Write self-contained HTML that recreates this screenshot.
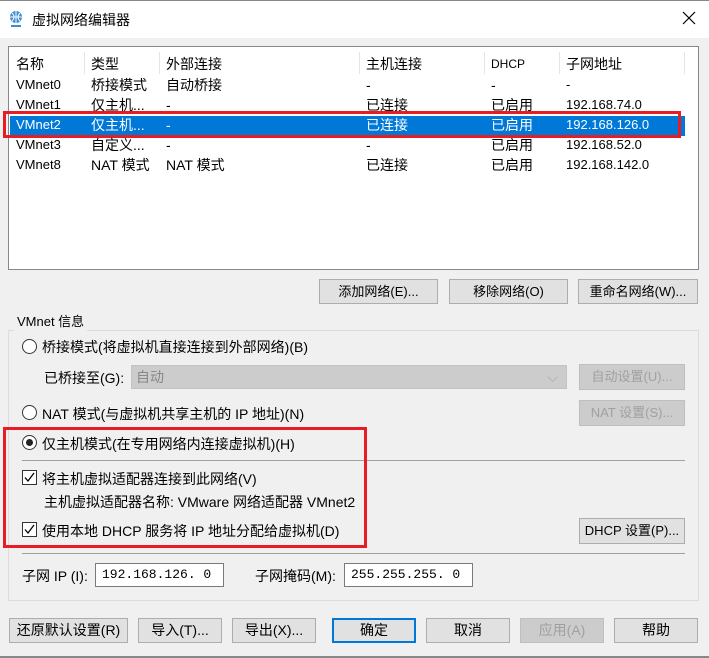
<!DOCTYPE html>
<html><head><meta charset="utf-8"><style>
*{margin:0;padding:0;box-sizing:border-box}
body{width:709px;height:658px;background:#f0f0f0;font-family:"Liberation Sans","Noto Sans CJK SC",sans-serif;font-size:13px;color:#000;position:relative;overflow:hidden}
.a{position:absolute;white-space:nowrap}
.btn{position:absolute;background:#e1e1e1;border:1px solid #adadad;text-align:center;line-height:23px;font-size:13px}
.dis{color:#a0a0a0;background:#ccc;border-color:#bfbfbf}
.radio{position:absolute;width:15px;height:15px;border:1px solid #333;border-radius:50%;background:#fff}
.chk{position:absolute;width:15px;height:15px;border:1px solid #333;background:#fff}
.inp{position:absolute;background:#fff;border:1px solid #7a7a7a;line-height:22px;padding-left:6px;font-family:"Liberation Mono",monospace;font-size:13px}
.col{position:absolute;top:75px;line-height:20px;font-size:14px;white-space:nowrap}
.col.s{font-size:13px}
</style></head><body>
<div class="a" style="left:0;top:0;width:709px;height:38px;background:#fff;border-top:1px solid #888"></div>
<svg class="a" style="left:8px;top:10px" width="16" height="18" viewBox="0 0 16 18"><circle cx="8" cy="7" r="6" fill="#3c8dd0"/><path d="M2 7h12M8 1v12M4 3q4 4 0 8M12 3q-4 4 0 8" stroke="#fff" stroke-width="1" fill="none"/><rect x="3" y="15" width="10" height="2" fill="#3c8dd0"/></svg>
<div class="a" style="left:32px;top:10px;font-size:14px">虚拟网络编辑器</div>
<svg class="a" style="left:682px;top:11px" width="14" height="14" viewBox="0 0 14 14"><path d="M1 1L13 13M13 1L1 13" stroke="#000" stroke-width="1.2"/></svg>

<div class="a" style="left:8px;top:46px;width:691px;height:224px;background:#fff;border:1px solid #828790"></div>
<div class="a" style="left:84px;top:52px;width:1px;height:22px;background:#e5e5e5"></div>
<div class="a" style="left:159px;top:52px;width:1px;height:22px;background:#e5e5e5"></div>
<div class="a" style="left:359px;top:52px;width:1px;height:22px;background:#e5e5e5"></div>
<div class="a" style="left:484px;top:52px;width:1px;height:22px;background:#e5e5e5"></div>
<div class="a" style="left:559px;top:52px;width:1px;height:22px;background:#e5e5e5"></div>
<div class="a" style="left:684px;top:52px;width:1px;height:22px;background:#e5e5e5"></div>
<div class="a" style="left:16px;top:54px;font-size:14px">名称</div>
<div class="a" style="left:91px;top:54px;font-size:14px">类型</div>
<div class="a" style="left:166px;top:54px;font-size:14px">外部连接</div>
<div class="a" style="left:366px;top:54px;font-size:14px">主机连接</div>
<div class="a" style="left:491px;top:57px;font-size:12px">DHCP</div>
<div class="a" style="left:566px;top:54px;font-size:14px">子网地址</div>

<div class="a" style="left:10px;top:116px;width:675px;height:20px;background:#0078d7"></div>
<div class="a" style="left:3px;top:111px;width:678px;height:27px;border:3px solid #e81c24"></div>

<div class="col s" style="left:16px">VMnet0<br>VMnet1<br><span style="color:#fff">VMnet2</span><br>VMnet3<br>VMnet8</div>
<div class="col" style="left:91px">桥接模式<br>仅主机...<br><span style="color:#fff">仅主机...</span><br>自定义...<br>NAT 模式</div>
<div class="col" style="left:166px">自动桥接<br>-<br><span style="color:#fff">-</span><br>-<br>NAT 模式</div>
<div class="col" style="left:366px">-<br>已连接<br><span style="color:#fff">已连接</span><br>-<br>已连接</div>
<div class="col" style="left:491px">-<br>已启用<br><span style="color:#fff">已启用</span><br>已启用<br>已启用</div>
<div class="col s" style="left:566px">-<br>192.168.74.0<br><span style="color:#fff">192.168.126.0</span><br>192.168.52.0<br>192.168.142.0</div>

<div class="btn" style="left:319px;top:279px;width:119px;height:25px">添加网络(E)...</div>
<div class="btn" style="left:449px;top:279px;width:119px;height:25px">移除网络(O)</div>
<div class="btn" style="left:578px;top:279px;width:120px;height:25px">重命名网络(W)...</div>

<div class="a" style="left:8px;top:330px;width:691px;height:271px;border:1px solid #dcdcdc"></div>
<div class="a" style="left:14px;top:313px;background:#f0f0f0;padding:0 3px;line-height:18px">VMnet 信息</div>

<div class="radio" style="left:22px;top:339px"></div>
<div class="a" style="left:42px;top:337px;font-size:14px">桥接模式(将虚拟机直接连接到外部网络)(B)</div>
<div class="a" style="left:44px;top:368px;font-size:14px">已桥接至(G):</div>
<div class="a" style="left:131px;top:365px;width:436px;height:24px;background:#ccc;border:1px solid #c3c3c3;color:#888;padding-left:4px;line-height:22px;font-size:14px">自动<span style="position:absolute;right:8px;color:#aaa">⌵</span></div>
<div class="btn dis" style="left:579px;top:364px;width:106px;height:26px">自动设置(U)...</div>
<div class="radio" style="left:22px;top:405px"></div>
<div class="a" style="left:42px;top:404px;font-size:14px">NAT 模式(与虚拟机共享主机的 IP 地址)(N)</div>
<div class="btn dis" style="left:579px;top:400px;width:106px;height:26px">NAT 设置(S)...</div>

<div class="radio" style="left:22px;top:435px"><div style="position:absolute;left:3px;top:3px;width:7px;height:7px;border-radius:50%;background:#222"></div></div>
<div class="a" style="left:42px;top:434px;font-size:14px">仅主机模式(在专用网络内连接虚拟机)(H)</div>
<div class="a" style="left:22px;top:460px;width:663px;height:1px;background:#a0a0a0"></div>
<div class="chk" style="left:22px;top:470px"><svg width="13" height="13" viewBox="0 0 13 13" style="position:absolute;left:0;top:0"><path d="M2 6.5L5 10L11 2" stroke="#000" stroke-width="1.3" fill="none"/></svg></div>
<div class="a" style="left:42px;top:469px;font-size:14px">将主机虚拟适配器连接到此网络(V)</div>
<div class="a" style="left:44px;top:492px;font-size:14px">主机虚拟适配器名称: VMware 网络适配器 VMnet2</div>
<div class="chk" style="left:22px;top:522px"><svg width="13" height="13" viewBox="0 0 13 13" style="position:absolute;left:0;top:0"><path d="M2 6.5L5 10L11 2" stroke="#000" stroke-width="1.3" fill="none"/></svg></div>
<div class="a" style="left:42px;top:521px;font-size:14px">使用本地 DHCP 服务将 IP 地址分配给虚拟机(D)</div>
<div class="btn" style="left:579px;top:518px;width:106px;height:26px">DHCP 设置(P)...</div>
<div class="a" style="left:3px;top:427px;width:364px;height:121px;border:3px solid #e81c24"></div>
<div class="a" style="left:22px;top:553px;width:663px;height:1px;background:#a0a0a0"></div>

<div class="a" style="left:22px;top:566px;font-size:14px">子网 IP (I):</div>
<div class="inp" style="left:95px;top:563px;width:129px;height:24px">192.168.126. 0</div>
<div class="a" style="left:255px;top:566px;font-size:14px">子网掩码(M):</div>
<div class="inp" style="left:344px;top:563px;width:129px;height:24px">255.255.255. 0</div>

<div class="btn" style="left:9px;top:618px;width:119px;height:25px;font-size:14px">还原默认设置(R)</div>
<div class="btn" style="left:138px;top:618px;width:84px;height:25px;font-size:14px">导入(T)...</div>
<div class="btn" style="left:232px;top:618px;width:84px;height:25px;font-size:14px">导出(X)...</div>
<div class="btn" style="left:332px;top:618px;width:84px;height:25px;border:2px solid #0078d7;line-height:21px;font-size:14px">确定</div>
<div class="btn" style="left:426px;top:618px;width:84px;height:25px;font-size:14px">取消</div>
<div class="btn dis" style="left:520px;top:618px;width:84px;height:25px;font-size:14px">应用(A)</div>
<div class="btn" style="left:614px;top:618px;width:84px;height:25px;font-size:14px">帮助</div>
<div class="a" style="left:0;top:656px;width:709px;height:2px;background:#888"></div>
</body></html>
